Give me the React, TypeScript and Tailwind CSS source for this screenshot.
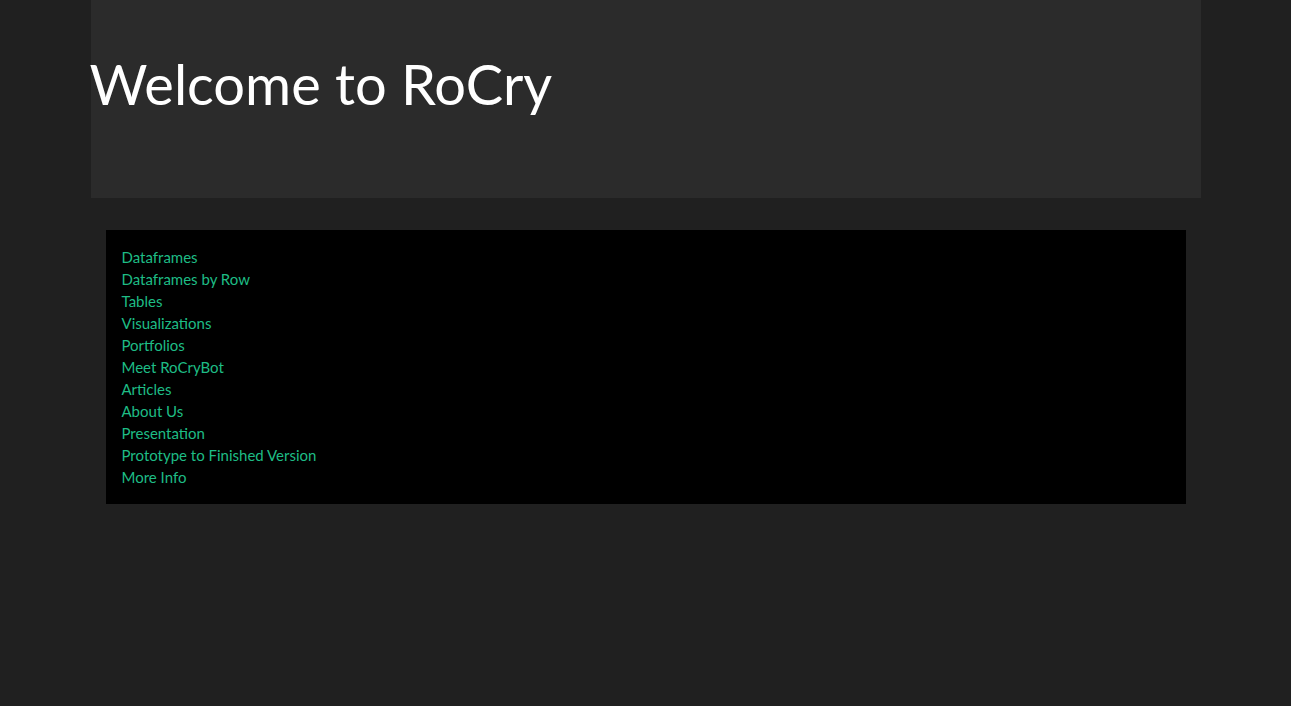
const links = [
  "Dataframes",
  "Dataframes by Row",
  "Tables",
  "Visualizations",
  "Portfolios",
  "Meet RoCryBot",
  "Articles",
  "About Us",
  "Presentation",
  "Prototype to Finished Version",
  "More Info",
]

export default function App() {
  return (
    <div className="min-h-[706px] bg-[#202020] font-['Lato',sans-serif]">
      <div className="mx-auto w-[1110px] h-[198px] bg-[#2b2b2b] pt-[50px]">
        <h1 className="text-[56px] leading-[1.2] text-white -ml-px">Welcome to RoCry</h1>
      </div>
      <div className="mx-auto mt-8 w-[1080px] bg-black p-4">
        <ul className="flex flex-col">
          {links.map((l) => (
            <li key={l} className="text-[15px] leading-[22px]">
              <a href="#" className="text-[#1ebc85]">
                {l}
              </a>
            </li>
          ))}
        </ul>
      </div>
    </div>
  )
}
